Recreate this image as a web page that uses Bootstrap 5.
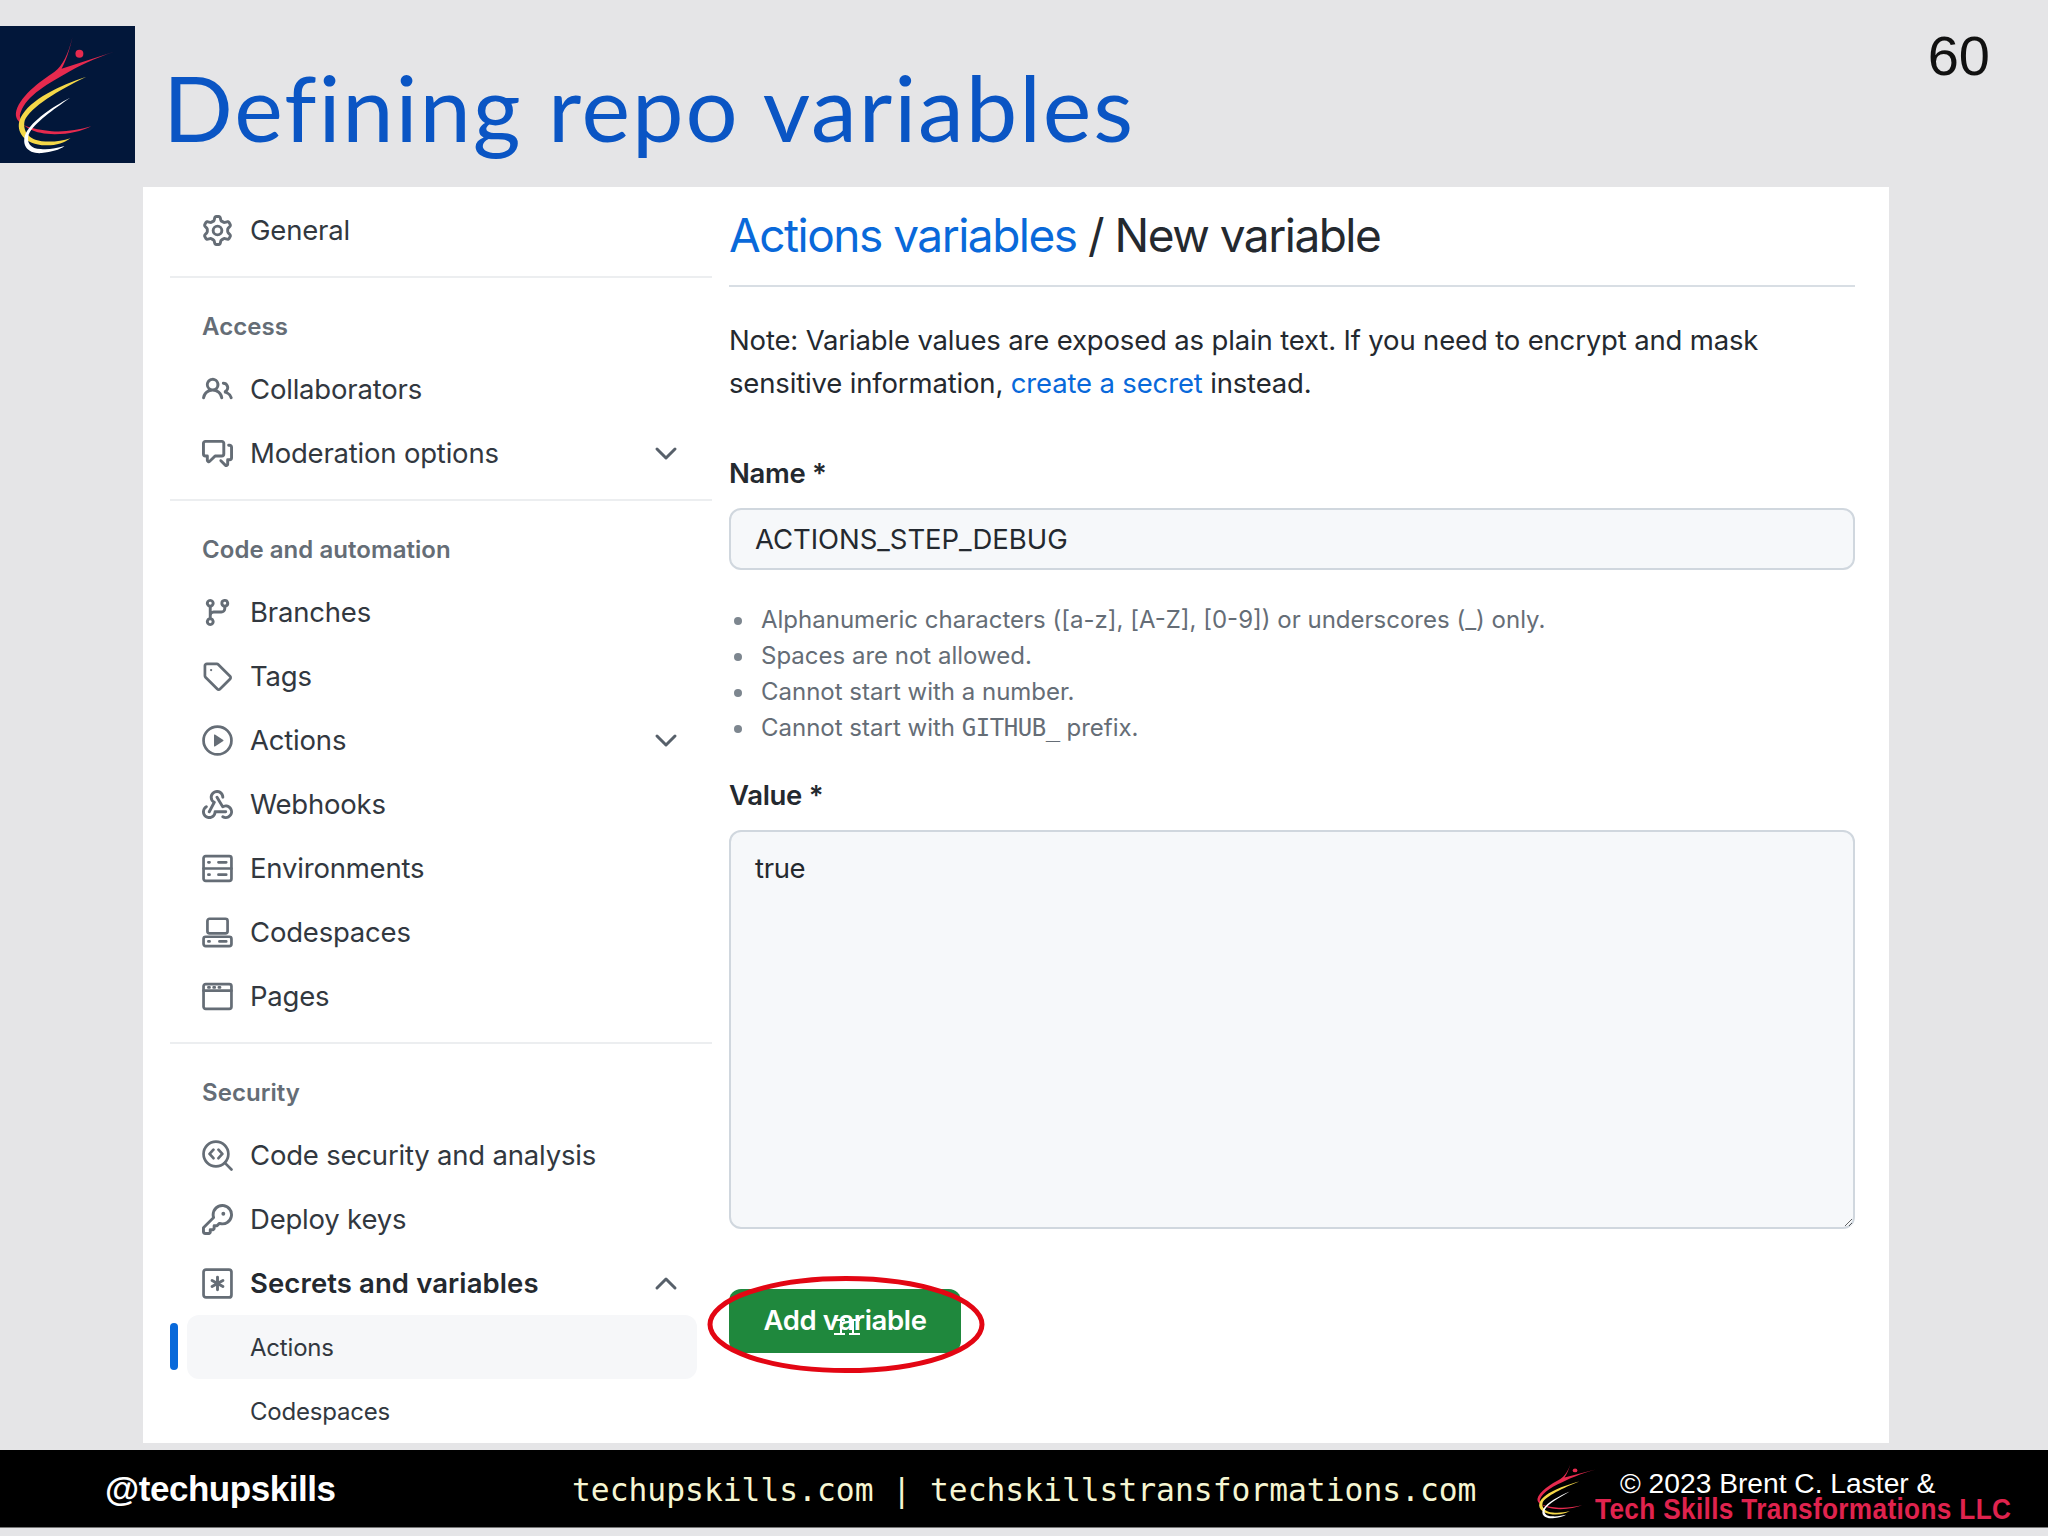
<!DOCTYPE html>
<html lang="en">
<head>
<meta charset="utf-8">
<title>Defining repo variables</title>
<link href="https://cdn.jsdelivr.net/npm/bootstrap@5.3.0/dist/css/bootstrap.min.css" rel="stylesheet">
<style>
html,body{margin:0;background:#e5e5e7}
body{width:2048px;height:1536px;overflow:hidden;font-family:"Inter","Liberation Sans",sans-serif;color:#24292f}
.slide-head{height:187px;padding-top:26px;align-items:flex-start}
.logo-box{width:135px;height:137px;background:#02173a;flex:none}
.slide-title{font-family:"Lato","Liberation Sans",sans-serif;font-weight:400;font-size:92px;line-height:1;color:#0a55c4;margin:35px 0 0 28px;letter-spacing:1.9px}
.slide-num{font-family:"Liberation Sans",sans-serif;font-size:56px;line-height:1;color:#111;margin:2px 58px 0 auto}
.panel{margin:0 159px 0 143px;height:1256px;background:#fff;overflow:hidden;padding-right:34px}
.side-col{width:542px;margin-left:27px;padding-top:11px;flex:none}
.side-row{height:64px;display:flex;align-items:center;padding:2px 0 0 32px;font-size:27.5px;letter-spacing:-.2px;color:#32383f;position:relative}
.side-row svg.ico{width:31px;height:31px;margin:-2px 17px 0 0;flex:none;color:#656d76}
.side-row .chev{position:absolute;right:30px;top:16px;width:32px;height:32px;color:#57606a}
.side-gap{margin-top:6px}
.side-label{height:48px;line-height:48px;padding-left:32px;font-size:24px;font-weight:600;letter-spacing:.05px;color:#656d76;margin-top:25px}
.side-rule{height:2px;background:#eceef0;margin-top:14px}
.side-strong{font-weight:600;color:#24292f;letter-spacing:.1px}
.side-sub{padding-left:80px;font-size:24px}
.side-active{background:#f6f7f9;border-radius:12px;margin:0 15px 0 17px;padding-left:63px}
.active-bar{position:absolute;left:-17px;top:8px;width:8px;height:47px;border-radius:4px;background:#0969da}
.main-col{margin-left:17px;width:1126px;flex:none}
.page-head{height:100px;border-bottom:2px solid #d8dee4;font-size:46px;line-height:97px;letter-spacing:-1.5px;color:#24292f;margin:0}
.page-head a,.note-text a{color:#0969da;text-decoration:none}
.note-text{font-size:27.5px;line-height:43px;letter-spacing:-.16px;margin:32px 0 0;color:#24292f}
.field-label{display:block;font-size:27.5px;font-weight:600;line-height:40px;letter-spacing:-.3px;margin:14px 0 15px;color:#24292f}
.first-field{margin-top:48px}
.gh-input{height:62px;background:#f6f8fa;border:2px solid #d0d7de;border-radius:12px;padding:0 24px;font-size:27.5px;letter-spacing:-.05px;color:#24292f;box-shadow:none}
.gh-area{height:399px;background:#f6f8fa;border:2px solid #d0d7de;border-radius:12px;padding:16px 24px;font-size:27.5px;letter-spacing:-.35px;color:#24292f;line-height:40px}
.rule-list{list-style:none;margin:32px 0 0;padding-left:32px;font-size:24px;line-height:36px;letter-spacing:0;color:#656d76}
.rule-list li::before{content:"";display:inline-block;width:8px;height:8px;border-radius:50%;background:#7d868f;margin-left:-27px;margin-right:19px;vertical-align:3px}
.rule-list code{font-family:"DejaVu Sans Mono",monospace;font-size:24px;color:#656d76;letter-spacing:-.45px}
.rule-list + .field-label{margin-top:29px}
.btn-wrap{position:relative;width:232px;margin-top:60px}
.add-btn{width:232px;height:64px;background:#1f883d;border:0;border-radius:12px;color:#fff;font-size:27.5px;font-weight:600;letter-spacing:-.35px;padding:0}
.ring{position:absolute;left:-22px;top:-13px;width:278px;height:97px;pointer-events:none}
.beam{position:absolute;left:104px;top:30px;width:28px;height:16px;pointer-events:none}
.foot-bar{margin-top:7px;height:78px;background:#000;border-bottom:1px solid #777;color:#fff;align-items:center}
.foot-handle{font-family:"Liberation Sans",sans-serif;font-weight:700;font-size:35px;margin-left:105px;width:467px;flex:none;letter-spacing:-.45px;padding-top:2px}
.foot-links{font-family:"DejaVu Sans Mono",monospace;font-size:31.3px;color:#f6f6d2;white-space:pre;width:956px;flex:none;padding-top:3px}
.foot-logo{width:80px;height:66px;flex:none;align-self:flex-start;margin:7px -13px 0 0}
.foot-copy{line-height:1;flex:none;padding-top:15px}
.copy-white{font-family:"Liberation Sans",sans-serif;font-size:28.2px;height:26px;margin-left:25px;white-space:nowrap}
.copy-red{font-family:"Liberation Sans",sans-serif;font-weight:700;font-size:29px;color:#e0234e;white-space:nowrap;transform:scaleX(.902);transform-origin:0 50%;letter-spacing:.4px}
</style>
</head>
<body>
<svg width="0" height="0" class="d-block position-absolute">
<defs>
<symbol id="mark" viewBox="0 0 136 138" preserveAspectRatio="none">
<path fill="#e62a4e" d="M73 11C70 25 66 36 62 43L115 26C95 33 80 40 66 48C45 60 24 72 20 90C20 102 35 109 55 109C70 109 82 106 92 101C78 105 65 107 52 106C32 104 15 100 16 88C18 72 40 56 55 46C63 40 69 28 73 11Z"/>
<circle cx="80" cy="28" r="4" fill="#e62a4e"/>
<path fill="#f5d848" d="M87 51C60 60 30 74 21 92C15 104 22 118 42 120C55 121 64 118 71 113C62 116 52 117 42 116C30 115 22 106 25 95C30 82 60 64 87 51Z"/>
<path fill="#fff" d="M71 72C52 82 33 95 26 108C21 120 28 129 42 128C52 127 60 125 65 121C57 123 49 125 41 124C31 124 26 117 29 109C34 98 54 84 71 72Z"/>
</symbol>
</defs>
</svg>

<header class="slide-head d-flex">
  <div class="logo-box"><svg width="135" height="137"><use href="#mark" width="135" height="137"/></svg></div>
  <h1 class="slide-title">Defining repo variables</h1>
  <div class="slide-num">60</div>
</header>

<section class="panel d-flex">
  <nav class="side-col">
    <div class="side-row"><svg class="ico" viewBox="0 0 16 16" fill="currentColor"><path d="M8 0a8.2 8.2 0 0 1 .701.031C9.444.095 9.99.645 10.16 1.29l.288 1.107c.018.066.079.158.212.224.231.114.454.243.668.386.123.082.233.09.299.071l1.103-.303c.644-.176 1.392.021 1.82.63.27.385.506.792.704 1.218.315.675.111 1.422-.364 1.891l-.814.806c-.049.048-.098.147-.088.294.016.257.016.515 0 .772-.01.147.038.246.088.294l.814.806c.475.469.679 1.216.364 1.891a7.977 7.977 0 0 1-.704 1.217c-.428.61-1.176.807-1.82.63l-1.102-.302c-.067-.019-.177-.011-.3.071a5.909 5.909 0 0 1-.668.386c-.133.066-.194.158-.211.224l-.29 1.106c-.168.646-.715 1.196-1.458 1.26a8.006 8.006 0 0 1-1.402 0c-.743-.064-1.289-.614-1.458-1.26l-.289-1.106c-.018-.066-.079-.158-.212-.224a5.738 5.738 0 0 1-.668-.386c-.123-.082-.233-.09-.299-.071l-1.103.303c-.644.176-1.392-.021-1.82-.63a8.12 8.12 0 0 1-.704-1.218c-.315-.675-.111-1.422.363-1.891l.815-.806c.05-.048.098-.147.088-.294a6.214 6.214 0 0 1 0-.772c.01-.147-.038-.246-.088-.294l-.815-.806C.635 6.045.431 5.298.746 4.623a7.92 7.92 0 0 1 .704-1.217c.428-.61 1.176-.807 1.82-.63l1.102.302c.067.019.177.011.3-.071.214-.143.437-.272.668-.386.133-.066.194-.158.211-.224l.29-1.106C6.009.645 6.556.095 7.299.03 7.53.01 7.764 0 8 0Zm-.571 1.525c-.036.003-.108.036-.137.146l-.289 1.105c-.147.561-.549.967-.998 1.189-.173.086-.34.183-.5.29-.417.278-.97.423-1.529.27l-1.103-.303c-.109-.03-.175.016-.195.045-.22.312-.412.644-.573.99-.014.031-.021.11.059.19l.815.806c.411.406.562.957.53 1.456a4.709 4.709 0 0 0 0 .582c.032.499-.119 1.05-.53 1.456l-.815.806c-.081.08-.073.159-.059.19.162.346.353.677.573.989.02.03.085.076.195.046l1.102-.303c.56-.153 1.113-.008 1.53.27.161.107.328.204.501.29.447.222.85.629.997 1.189l.289 1.105c.029.109.101.143.137.146a6.6 6.6 0 0 0 1.142 0c.036-.003.108-.036.137-.146l.289-1.105c.147-.561.549-.967.998-1.189.173-.086.34-.183.5-.29.417-.278.97-.423 1.529-.27l1.103.303c.109.029.175-.016.195-.045.22-.313.411-.644.573-.99.014-.031.021-.11-.059-.19l-.815-.806c-.411-.406-.562-.957-.53-1.456a4.709 4.709 0 0 0 0-.582c-.032-.499.119-1.05.53-1.456l.815-.806c.081-.08.073-.159.059-.19a6.464 6.464 0 0 0-.573-.989c-.02-.03-.085-.076-.195-.046l-1.102.303c-.56.153-1.113.008-1.53-.27a4.44 4.44 0 0 0-.501-.29c-.447-.222-.85-.629-.997-1.189l-.289-1.105c-.029-.11-.101-.143-.137-.146a6.6 6.6 0 0 0-1.142 0ZM11 8a3 3 0 1 1-6 0 3 3 0 0 1 6 0ZM9.5 8a1.5 1.5 0 1 0-3.001.001A1.5 1.5 0 0 0 9.5 8Z"/></svg>General</div>
    <div class="side-rule"></div>

    <div class="side-label">Access</div>
    <div class="side-row side-gap"><svg class="ico" viewBox="0 0 16 16" fill="currentColor"><path d="M2 5.5a3.5 3.5 0 1 1 5.898 2.549 5.508 5.508 0 0 1 3.034 4.084.75.75 0 1 1-1.482.235 4 4 0 0 0-7.9 0 .75.75 0 0 1-1.482-.236A5.507 5.507 0 0 1 3.102 8.05 3.493 3.493 0 0 1 2 5.5ZM11 4a3.001 3.001 0 0 1 2.22 5.018 5.01 5.01 0 0 1 2.56 3.012.749.749 0 0 1-.885.954.752.752 0 0 1-.549-.514 3.507 3.507 0 0 0-2.522-2.372.75.75 0 0 1-.574-.73v-.352a.75.75 0 0 1 .416-.672A1.5 1.5 0 0 0 11 5.5.75.75 0 0 1 11 4Zm-5.5-.5a2 2 0 1 0-.001 3.999A2 2 0 0 0 5.5 3.5Z"/></svg>Collaborators</div>
    <div class="side-row"><svg class="ico" viewBox="0 0 16 16" fill="currentColor"><path d="M1.75 1h8.5c.966 0 1.75.784 1.75 1.75v5.5A1.75 1.75 0 0 1 10.25 10H7.061l-2.574 2.573A1.458 1.458 0 0 1 2 11.543V10h-.25A1.75 1.75 0 0 1 0 8.25v-5.5C0 1.784.784 1 1.75 1ZM1.5 2.75v5.5c0 .138.112.25.25.25h1a.75.75 0 0 1 .75.75v2.19l2.72-2.72a.749.749 0 0 1 .53-.22h3.5a.25.25 0 0 0 .25-.25v-5.5a.25.25 0 0 0-.25-.25h-8.5a.25.25 0 0 0-.25.25Zm13 2a.25.25 0 0 0-.25-.25h-.5a.75.75 0 0 1 0-1.5h.5c.966 0 1.75.784 1.75 1.75v5.5A1.75 1.75 0 0 1 14.25 12H14v1.543a1.458 1.458 0 0 1-2.487 1.03L9.22 12.28a.749.749 0 0 1 .326-1.275.749.749 0 0 1 .734.215l2.22 2.22v-2.19a.75.75 0 0 1 .75-.75h1a.25.25 0 0 0 .25-.25Z"/></svg>Moderation options<svg class="chev" viewBox="0 0 16 16" fill="none" stroke="currentColor" stroke-width="1.5" stroke-linecap="round" stroke-linejoin="round"><path d="M3.5 6 8 10.5 12.5 6"/></svg></div>
    <div class="side-rule"></div>

    <div class="side-label">Code and automation</div>
    <div class="side-row side-gap"><svg class="ico" viewBox="0 0 16 16" fill="currentColor"><path d="M9.5 3.25a2.25 2.25 0 1 1 3 2.122V6A2.5 2.5 0 0 1 10 8.5H6a1 1 0 0 0-1 1v1.128a2.251 2.251 0 1 1-1.5 0V5.372a2.25 2.25 0 1 1 1.5 0v1.836A2.493 2.493 0 0 1 6 7h4a1 1 0 0 0 1-1v-.628A2.25 2.25 0 0 1 9.5 3.25Zm-6 0a.75.75 0 1 0 1.5 0 .75.75 0 0 0-1.5 0Zm8.25-.75a.75.75 0 1 0 0 1.5.75.75 0 0 0 0-1.5ZM4.25 12a.75.75 0 1 0 0 1.5.75.75 0 0 0 0-1.5Z"/></svg>Branches</div>
    <div class="side-row"><svg class="ico" viewBox="0 0 16 16" fill="none" stroke="currentColor" stroke-width="1.4" stroke-linejoin="round"><path d="M1.5 2.5c0-.55.45-1 1-1h5.17c.27 0 .52.1.71.29l6.1 6.1c.39.39.39 1.02 0 1.41l-5.17 5.17c-.39.39-1.02.39-1.41 0l-6.1-6.1a1 1 0 0 1-.29-.71V2.5Z"/><circle cx="4.7" cy="4.7" r=".6" fill="currentColor" stroke="none"/></svg>Tags</div>
    <div class="side-row"><svg class="ico" viewBox="0 0 16 16" fill="none" stroke="currentColor" stroke-width="1.4"><circle cx="8" cy="8" r="7.2"/><path fill="currentColor" stroke="none" d="M6.2 5.2v5.6c0 .25.27.4.48.26l4.3-2.8c.19-.12.19-.4 0-.52l-4.3-2.8a.31.31 0 0 0-.48.26Z"/></svg>Actions<svg class="chev" viewBox="0 0 16 16" fill="none" stroke="currentColor" stroke-width="1.5" stroke-linecap="round" stroke-linejoin="round"><path d="M3.5 6 8 10.5 12.5 6"/></svg></div>
    <div class="side-row"><svg class="ico" viewBox="0 0 16 16" fill="currentColor"><path d="M5.5 4.25a2.25 2.25 0 0 1 4.5 0 .75.75 0 0 0 1.5 0 3.75 3.75 0 1 0-6.14 2.889l-2.272 4.258a.75.75 0 0 0 1.324.706L7 7.25a.75.75 0 0 0-.309-1.015A2.25 2.25 0 0 1 5.5 4.25Z"/><path d="M7.364 3.607a.75.75 0 0 1 1.03.257l2.608 4.349a3.75 3.75 0 1 1-.628 6.785.75.75 0 0 1 .752-1.299 2.25 2.25 0 1 0-.033-3.88.75.75 0 0 1-1.03-.256L7.107 4.636a.75.75 0 0 1 .257-1.03Z"/><path d="M2.9 8.776A.75.75 0 0 1 2.625 9.8 2.25 2.25 0 1 0 6 11.75a.75.75 0 0 1 .75-.751h5.5a.75.75 0 0 1 0 1.5H7.425a3.751 3.751 0 1 1-5.55-3.998.75.75 0 0 1 1.024.274Z"/></svg>Webhooks</div>
    <div class="side-row"><svg class="ico" viewBox="0 0 16 16" fill="none" stroke="currentColor" stroke-width="1.4" stroke-linecap="round"><rect x=".8" y="1.6" width="14.4" height="12.8" rx="1.1"/><path d="M.8 8h14.4M8.5 4.8h4M8.5 11.2h4M3.3 4.8h.6M3.3 11.2h.6"/></svg>Environments</div>
    <div class="side-row"><svg class="ico" viewBox="0 0 16 16" fill="none" stroke="currentColor" stroke-width="1.4" stroke-linecap="round"><rect x="2.8" y=".9" width="10.4" height="7.6" rx="1.1"/><rect x=".8" y="10.2" width="14.4" height="4.8" rx="1.1"/><path d="M3.3 12.6h.6M9 12.6h3.5"/></svg>Codespaces</div>
    <div class="side-row"><svg class="ico" viewBox="0 0 16 16" fill="none" stroke="currentColor" stroke-width="1.4" stroke-linecap="round"><rect x=".8" y="1.6" width="14.4" height="12.8" rx="1.1"/><path d="M.8 5h14.4M3.3 3.3h.6M6 3.3h.6M8.7 3.3h.6"/></svg>Pages</div>
    <div class="side-rule"></div>

    <div class="side-label">Security</div>
    <div class="side-row side-gap"><svg class="ico" viewBox="0 0 16 16" fill="none" stroke="currentColor" stroke-width="1.4" stroke-linecap="round" stroke-linejoin="round"><circle cx="7.2" cy="7.2" r="6.4"/><path d="m11.8 11.8 3.4 3.4M5.9 5 3.9 7.2l2 2.2M8.5 5l2 2.2-2 2.2"/></svg>Code security and analysis</div>
    <div class="side-row"><svg class="ico" viewBox="0 0 16 16" fill="currentColor"><path d="M10.5 0a5.499 5.499 0 1 1-1.288 10.848l-.932.932a.749.749 0 0 1-.53.22H7v.75a.749.749 0 0 1-.22.53l-.5.5a.749.749 0 0 1-.53.22H5v.75a.749.749 0 0 1-.22.53l-.5.5a.749.749 0 0 1-.53.22h-2A1.75 1.75 0 0 1 0 14.25v-2c0-.199.079-.389.22-.53l4.932-4.932A5.5 5.5 0 0 1 10.5 0Zm-4 5.5c-.001.431.069.86.205 1.269a.75.75 0 0 1-.181.768L1.5 12.56v1.69c0 .138.112.25.25.25h1.69l.06-.06v-1.19a.75.75 0 0 1 .75-.75h1.19l.06-.06v-1.19a.75.75 0 0 1 .75-.75h1.19l1.023-1.025a.75.75 0 0 1 .768-.18A4 4 0 1 0 6.5 5.5ZM11 6a1 1 0 1 1 0-2 1 1 0 0 1 0 2Z"/></svg>Deploy keys</div>
    <div class="side-row side-strong"><svg class="ico" viewBox="0 0 16 16" fill="none" stroke="currentColor" stroke-width="1.4" stroke-linecap="round"><rect x=".8" y=".8" width="14.4" height="14.4" rx="1.3"/><path stroke-width="1.5" d="M8 4.8v6.4M5.2 6.4l5.6 3.2M10.8 6.4 5.2 9.6"/></svg>Secrets and variables<svg class="chev" viewBox="0 0 16 16" fill="none" stroke="currentColor" stroke-width="1.5" stroke-linecap="round" stroke-linejoin="round"><path d="M3.5 10.5 8 6l4.5 4.5"/></svg></div>
    <div class="side-row side-sub side-active"><span class="active-bar"></span>Actions</div>
    <div class="side-row side-sub">Codespaces</div>
  </nav>

  <main class="main-col">
    <h2 class="page-head fw-normal"><a href="#">Actions variables</a> / New variable</h2>
    <p class="note-text">Note: Variable values are exposed as plain text. If you need to encrypt and mask<br>sensitive information, <a href="#">create a secret</a> instead.</p>
    <form>
      <label class="field-label first-field" for="nameField">Name *</label>
      <input id="nameField" class="form-control gh-input" type="text" value="ACTIONS_STEP_DEBUG">
      <ul class="rule-list">
        <li>Alphanumeric characters ([a-z], [A-Z], [0-9]) or underscores (_) only.</li>
        <li>Spaces are not allowed.</li>
        <li>Cannot start with a number.</li>
        <li>Cannot start with <code>GITHUB_</code> prefix.</li>
      </ul>
      <label class="field-label" for="valueField">Value *</label>
      <textarea id="valueField" class="form-control gh-area">true</textarea>
      <div class="btn-wrap">
        <button type="button" class="btn add-btn">Add variable</button>
        <svg class="beam" viewBox="0 0 28 16" fill="none" stroke="#fff" stroke-width="2"><path d="M1 1h11M16 1h11M1 15h11M16 15h11M8 1v14M20 1v14"/></svg>
        <svg class="ring" viewBox="0 0 278 97" fill="none"><ellipse cx="139" cy="48.5" rx="136" ry="46" stroke="#e30613" stroke-width="5"/></svg>
      </div>
    </form>
  </main>
</section>

<footer class="foot-bar d-flex">
  <div class="foot-handle">@techupskills</div>
  <div class="foot-links">techupskills.com | techskillstransformations.com</div>
  <svg class="foot-logo"><use href="#mark" width="80" height="66"/></svg>
  <div class="foot-copy">
    <div class="copy-white">© 2023 Brent C. Laster &amp;</div>
    <div class="copy-red">Tech Skills Transformations LLC</div>
  </div>
</footer>
<script src="https://cdn.jsdelivr.net/npm/bootstrap@5.3.0/dist/js/bootstrap.bundle.min.js"></script>
</body>
</html>
